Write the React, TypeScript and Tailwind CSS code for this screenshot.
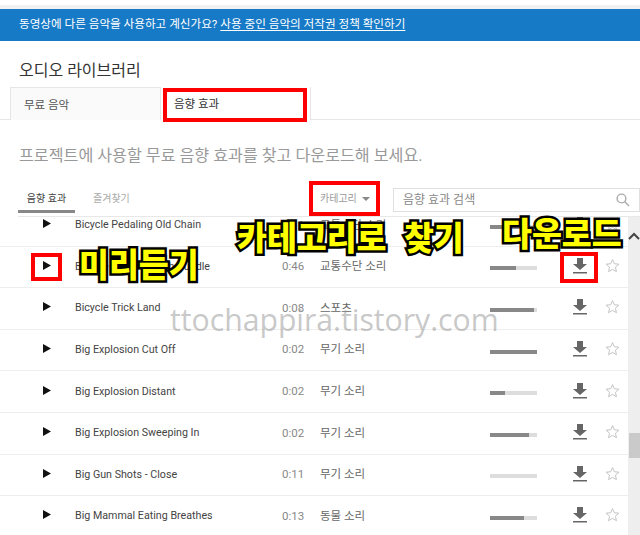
import React from "react";

const KR = "font-['Roboto','Noto_Sans_CJK_KR',sans-serif]";

const rows = [
  { t: "Bicycle Pedaling Old Chain", d: "0:11", c: "교통수단 소리", v: 70 },
  { t: "Bicycle Ride Through Puddle", d: "0:46", c: "교통수단 소리", v: 55 },
  { t: "Bicycle Trick Land", d: "0:08", c: "스포츠", v: 93 },
  { t: "Big Explosion Cut Off", d: "0:02", c: "무기 소리", v: 100 },
  { t: "Big Explosion Distant", d: "0:02", c: "무기 소리", v: 31 },
  { t: "Big Explosion Sweeping In", d: "0:02", c: "무기 소리", v: 83 },
  { t: "Big Gun Shots - Close", d: "0:11", c: "무기 소리", v: 0 },
  { t: "Big Mammal Eating Breathes", d: "0:13", c: "동물 소리", v: 73 },
];

function Play() {
  return (
    <svg width="8" height="9" viewBox="0 0 8 9" className="block">
      <path d="M0 0 L8 4.5 L0 9 Z" fill="#111" />
    </svg>
  );
}

function Download() {
  return (
    <svg width="14" height="16" viewBox="0 0 14 16" className="block">
      <path d="M4 0 H10 V6 H14 L7 12 L0 6 H4 Z M0 14 H14 V15.5 H0 Z" fill="#666" />
    </svg>
  );
}

function Star() {
  return (
    <svg width="15" height="15" viewBox="0 0 24 24" className="block" fill="none" stroke="#c4c4c4" strokeWidth="1.6">
      <path d="M12 2.5 L14.9 9.2 L22.2 9.9 L16.7 14.7 L18.3 21.9 L12 18.1 L5.7 21.9 L7.3 14.7 L1.8 9.9 L9.1 9.2 Z" />
    </svg>
  );
}

function Row({ r }: { r: (typeof rows)[number] }) {
  return (
    <div className="flex h-[41.6px] shrink-0 items-center border-b border-[#eeeeee] text-[11.5px] text-[#555]">
      <div className="ml-[43px] mb-[3px] w-[32px]">
        <Play />
      </div>
      <div className="w-[207px] truncate text-[10.7px] text-[#444]">{r.t}</div>
      <div className="w-[38px] text-[#888]">{r.d}</div>
      <div className="w-[170px] text-[11.5px] text-[#666]">{r.c}</div>
      <div className="mt-[3px] h-[4px] w-[47px] bg-[#dddddd]">
        <div className="h-full bg-[#888888]" style={{ width: `${r.v}%` }} />
      </div>
      <div className="ml-[36px] mb-[2px]">
        <Download />
      </div>
      <div className="ml-[18px] mb-[3px]">
        <Star />
      </div>
    </div>
  );
}

function RedBox({ className }: { className: string }) {
  return <div className={`absolute border-[4px] border-[#ff0000] ${className}`} />;
}

const callout =
  "absolute whitespace-nowrap font-['Noto_Sans_CJK_KR',sans-serif] font-black text-[#ffff00] [-webkit-text-stroke:5px_#000] [paint-order:stroke_fill] leading-none";

export default function App() {
  return (
    <div className={`relative h-[535px] w-[640px] overflow-hidden bg-white ${KR}`}>
      <div className="h-[5px] bg-white" />
      <div className="h-[4px] bg-[#f1f1f1]" />
      <div className="flex h-[32px] items-center whitespace-nowrap bg-[#167ac6] pl-[19px] text-[11.6px] text-white">
        <span>동영상에 다른 음악을 사용하고 계신가요?</span>
        <span className="ml-[3px] underline underline-offset-2">사용 중인 음악의 저작권 정책 확인하기</span>
      </div>

      <div className="pl-[19px] pt-[19px] text-[16px] leading-[22px] text-[#333]">오디오 라이브러리</div>

      <div className="mt-[5px] flex h-[33px] border-b border-[#e6e6e6] pl-[10px] text-[11.5px] text-[#555]">
        <div className="flex h-[33px] w-[151px] items-center border border-b-0 border-[#e6e6e6] bg-[#fafafa] pl-[13px] pt-[3px]">무료 음악</div>
        <div className="flex h-[33px] w-[150px] items-center border-r border-[#e6e6e6] bg-white pl-[13px] pt-[3px] text-[#333]">음향 효과</div>
      </div>

      <div className="pl-[19px] pt-[25px] text-[16.15px] leading-[22px] text-[#999]">프로젝트에 사용할 무료 음향 효과를 찾고 다운로드해 보세요.</div>

      <div className="ml-[18px] mt-[24px] flex h-[26px] items-start whitespace-nowrap border-b border-[#e8e8e8] text-[10px]">
        <div className="flex h-[22px] w-[57px] items-start justify-center border-b-[3px] border-[#888] text-[#444]">음향 효과</div>
        <div className="ml-[18px] w-[36px] text-[#aaa]">즐겨찾기</div>
        <div className="ml-[191px] flex w-[73px] items-center text-[#999]">
          <span>카테고리</span>
          <span className="ml-[5px] mt-[1px] h-0 w-0 border-x-[4px] border-t-[4px] border-x-transparent border-t-[#888]" />
        </div>
        <div className="-mt-[3px] flex h-[24px] w-[247px] items-center justify-between border border-[#e0e0e0] px-[9px] text-[12px] text-[#888]">
          <span>음향 효과 검색</span>
          <svg width="14" height="14" viewBox="0 0 14 14" fill="none" stroke="#aaa" strokeWidth="1.4">
            <circle cx="5.5" cy="5.5" r="4.4" />
            <path d="M8.8 8.8 L13 13" />
          </svg>
        </div>
      </div>

      <div className="flex h-[318px]">
        <div className="h-full w-[628px] overflow-hidden">
          <div className="-mt-[12px] flex flex-col">
            {rows.map((r) => (
              <Row key={r.t} r={r} />
            ))}
          </div>
        </div>
        <div className="relative h-full w-[12px] bg-[#eeeeee]">
          <svg width="12" height="8" viewBox="0 0 12 8" className="absolute left-0 top-[15px]" fill="none" stroke="#444" strokeWidth="2">
            <path d="M1 7 L6 2 L11 7" />
          </svg>
          <div className="absolute left-[1px] top-[216px] h-[25px] w-[11px] bg-[#cacaca]" />
        </div>
      </div>

      <RedBox className="left-[163px] top-[88px] h-[34px] w-[144px]" />
      <RedBox className="left-[309px] top-[181px] h-[35px] w-[71px]" />
      <RedBox className="left-[31px] top-[253px] h-[28px] w-[31px]" />
      <RedBox className="left-[560px] top-[252px] h-[31px] w-[38px]" />

      <div className={`${callout} left-[237px] top-[220px] text-[32.5px] [word-spacing:10px]`}>카테고리로 찾기</div>
      <div className={`${callout} left-[502px] top-[216px] text-[32.5px]`}>다운로드</div>
      <div className={`${callout} left-[79px] top-[247px] text-[32.5px]`}>미리듣기</div>

      <div className="absolute left-[170px] top-[298px] whitespace-nowrap font-['Open_Sans',sans-serif] text-[30.2px] leading-[44px] text-[#9a9a9a]/55">
        ttochappira.tistory.com
      </div>
    </div>
  );
}
